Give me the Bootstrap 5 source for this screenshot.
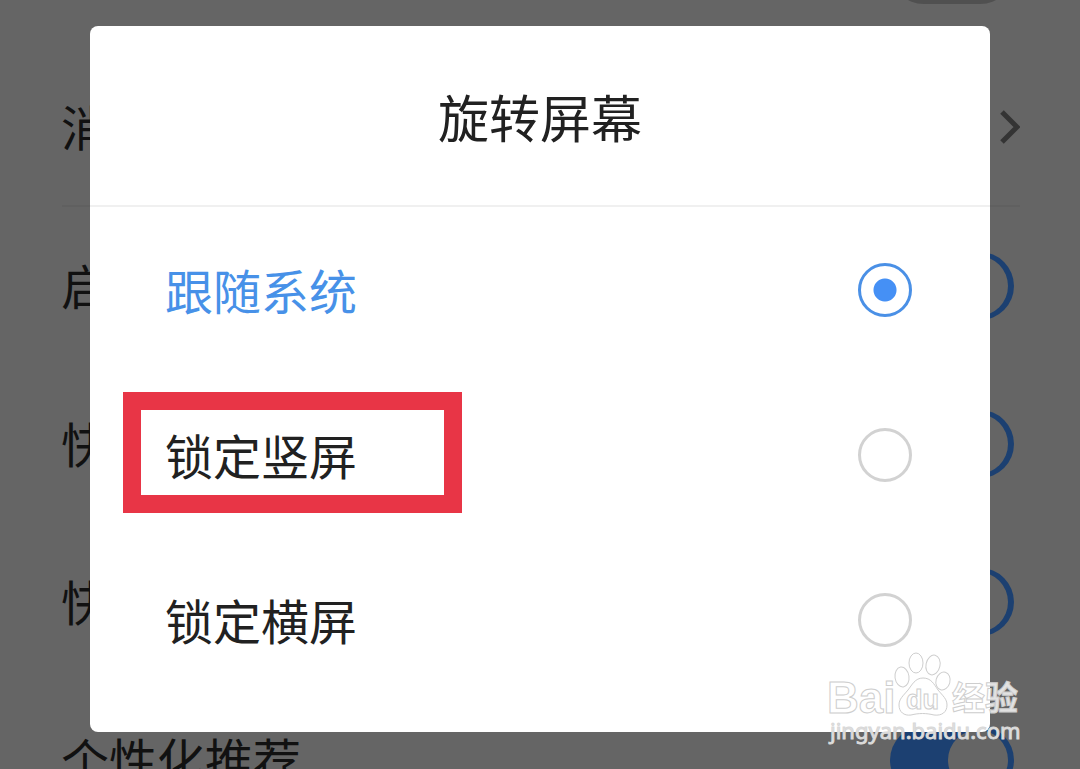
<!DOCTYPE html>
<html lang="zh-CN">
<head>
<meta charset="utf-8">
<meta name="viewport" content="width=device-width, initial-scale=1">
<title>旋转屏幕</title>
<link href="https://cdn.jsdelivr.net/npm/bootstrap@5.3.0/dist/css/bootstrap.min.css" rel="stylesheet">
<style>
body{font-family:"Noto Sans CJK SC",sans-serif;background:#656565;color:#111}
.screen{height:100vh}
/* settings list, scrolled so that its first row is cut by the top edge */
.settings{margin-top:-109px;padding:0 60px 0 62px;font-size:48px;line-height:72px}
.setting{height:158px;padding-right:6px}
.setting>label,.setting>span{padding-bottom:4px;margin-left:-1px}
.setting-ruled{border-bottom:2px solid #606060;padding-right:0}
.toggle-switch{appearance:none;width:124px;height:68px;border-radius:34px;background:#505050;margin:0;position:relative}
.toggle-switch:checked{background:#1c4071}
.toggle-switch:checked::after{content:"";position:absolute;top:4px;right:6px;width:60px;height:60px;border-radius:50%;background:#656565}
.dialog-layer{padding:26px 90px 0}
.dialog-box{border-radius:8px;padding-bottom:30px;color:#212121}
.dialog-head{height:181px;border-bottom:2px solid #f0f0f0;font-size:51px;line-height:76px}
.choice{height:165px;padding:0 78px 0 75px;font-size:48px;line-height:72px}
.choice label{position:relative;padding-bottom:2px}
.choice-active{color:#4791e8}
.dot-radio{appearance:none;width:54px;height:54px;margin:0;border:3px solid #d2d2d2;border-radius:50%;background:#fff}
.dot-radio:checked{border-color:#4a90e6;background:radial-gradient(circle,#4590f5 11px,#fff 12px)}
.marked::before{content:"";position:absolute;left:-42px;right:-105px;top:-26px;bottom:-21px;border:18px solid #e83546}
.watermark{right:60px;top:652px;width:192px;height:96px;color:rgba(255,255,255,.82)}
.watermark svg{display:block;overflow:visible}
.wm-brand{font-family:"Liberation Sans",sans-serif;font-weight:bold;font-size:44px}
.wm-du{font-family:"Liberation Sans",sans-serif;font-weight:bold;font-size:27px}
.wm-cjk{font-family:"Noto Sans CJK SC",sans-serif;font-weight:bold;font-size:33px}
.wm-url{font-family:"Noto Sans",sans-serif;font-size:22px}
</style>
<script src="https://cdn.jsdelivr.net/npm/bootstrap@5.3.0/dist/js/bootstrap.bundle.min.js"></script>
</head>
<body>
<div class="screen position-relative overflow-hidden">
  <div class="settings">
    <div class="setting d-flex align-items-center justify-content-end"><input class="toggle-switch" type="checkbox" aria-label="开关"></div>
    <div class="setting setting-ruled d-flex align-items-center justify-content-between">
      <span>消</span>
      <svg width="20" height="36" viewBox="0 0 20 36" fill="none" stroke="#343434" stroke-width="5" aria-hidden="true"><path d="M2 3 17 18 2 33"/></svg>
    </div>
    <div class="setting d-flex align-items-center justify-content-between"><label for="s1">启</label><input id="s1" class="toggle-switch" type="checkbox" checked></div>
    <div class="setting d-flex align-items-center justify-content-between"><label for="s2">快</label><input id="s2" class="toggle-switch" type="checkbox" checked></div>
    <div class="setting d-flex align-items-center justify-content-between"><label for="s3">快</label><input id="s3" class="toggle-switch" type="checkbox" checked></div>
    <div class="setting d-flex align-items-center justify-content-between"><label for="s4">个性化推荐</label><input id="s4" class="toggle-switch" type="checkbox" checked></div>
  </div>

  <div class="dialog-layer position-absolute top-0 start-0 w-100">
    <div class="dialog-box bg-white" role="dialog" aria-labelledby="dlg">
      <div class="dialog-head d-flex align-items-center justify-content-center"><span id="dlg">旋转屏幕</span></div>
      <div class="choice choice-active d-flex align-items-center justify-content-between"><label for="r1">跟随系统</label><input id="r1" class="dot-radio" type="radio" name="rotate" checked></div>
      <div class="choice d-flex align-items-center justify-content-between"><label for="r2" class="marked">锁定竖屏</label><input id="r2" class="dot-radio" type="radio" name="rotate"></div>
      <div class="choice d-flex align-items-center justify-content-between"><label for="r3">锁定横屏</label><input id="r3" class="dot-radio" type="radio" name="rotate"></div>
    </div>
  </div>

  <div class="watermark position-absolute">
    <svg width="192" height="96" viewBox="0 0 192 96" fill="currentColor" stroke="#cecece" stroke-width="1">
      <text class="wm-brand" x="-1" y="61">Bai</text>
      <ellipse cx="74" cy="25" rx="7" ry="10" transform="rotate(-8 74 25)"/>
      <ellipse cx="88" cy="11" rx="7" ry="10"/>
      <ellipse cx="105" cy="13" rx="7" ry="10" transform="rotate(12 105 13)"/>
      <ellipse cx="115" cy="29" rx="7" ry="9" transform="rotate(15 115 29)"/>
      <path d="M95 26c-8 0-11 7-15 12-5 6-9 9-9 15 0 7 5 11 12 10 8-2 15-2 23 0 8 1 13-3 13-10 0-6-4-9-9-15-4-6-7-12-15-12z"/>
      <text class="wm-du" x="78" y="57">du</text>
      <text class="wm-cjk" x="124" y="58">经验</text>
      <text class="wm-url" x="2" y="87" stroke="#d8d8d8" stroke-width="1" fill="#e0e0e0">jingyan.baidu.com</text>
    </svg>
  </div>
</div>
</body>
</html>
